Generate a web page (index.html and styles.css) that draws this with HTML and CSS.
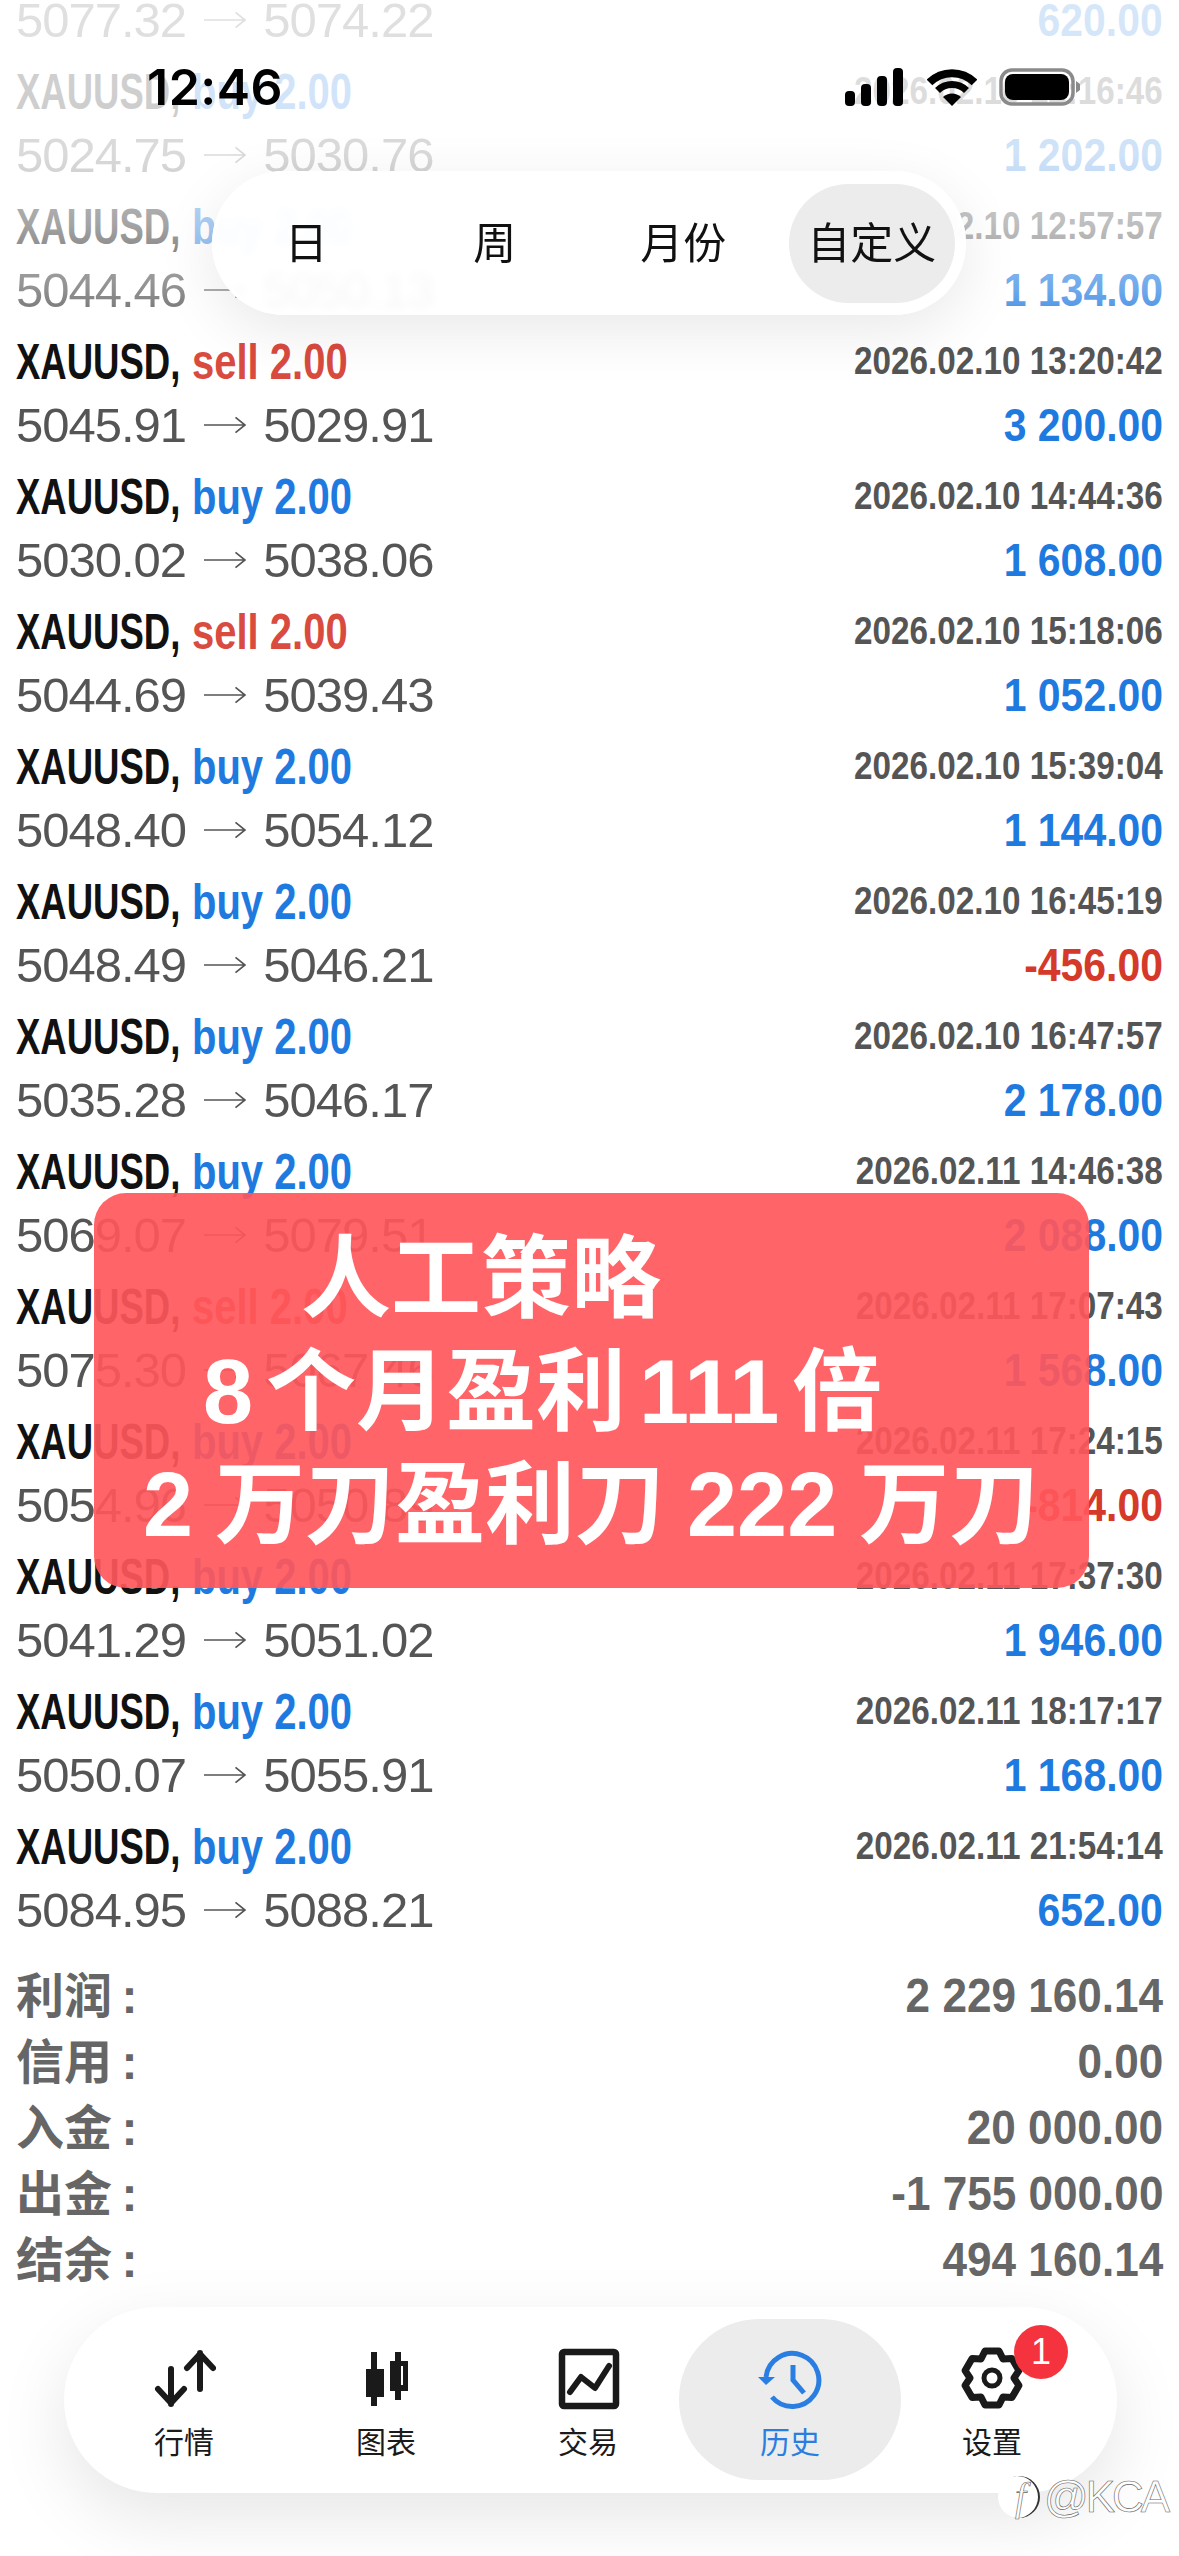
FILE: index.html
```html
<!DOCTYPE html>
<html lang="zh-CN">
<head>
    <meta charset="UTF-8">
    <meta name="viewport" content="width=device-width, initial-scale=1.0">
    <title>历史</title>
    <link rel="stylesheet" href="styles.css">
</head>
<body>
    <svg class="defs" width="0" height="0">
        <symbol id="arrow" viewBox="0 0 44 20"><path d="M0 10H42.5M33 2L43 10L33 18" fill="none" stroke="#555" stroke-width="1.8"/></symbol>
    </svg>
    <div class="screen">
        <div class="deals">
            <div class="deal">
                <div class="prices">5077.32 <svg class="arrow"><use href="#arrow"/></svg> 5074.22</div>
                <div class="amount">620.00</div>
            </div>
            <div class="deal">
                <div class="title"><span class="symbol">XAUUSD,</span><span class="side buy">buy 2.00</span></div>
                <div class="date">2026.02.10 12:16:46</div>
                <div class="prices">5024.75 <svg class="arrow"><use href="#arrow"/></svg> 5030.76</div>
                <div class="amount">1 202.00</div>
            </div>
            <div class="deal">
                <div class="title"><span class="symbol">XAUUSD,</span><span class="side buy">buy 2.00</span></div>
                <div class="date">2026.02.10 12:57:57</div>
                <div class="prices">5044.46 <svg class="arrow"><use href="#arrow"/></svg> 5050.13</div>
                <div class="amount">1 134.00</div>
            </div>
            <div class="deal">
                <div class="title"><span class="symbol">XAUUSD,</span><span class="side sell">sell 2.00</span></div>
                <div class="date">2026.02.10 13:20:42</div>
                <div class="prices">5045.91 <svg class="arrow"><use href="#arrow"/></svg> 5029.91</div>
                <div class="amount">3 200.00</div>
            </div>
            <div class="deal">
                <div class="title"><span class="symbol">XAUUSD,</span><span class="side buy">buy 2.00</span></div>
                <div class="date">2026.02.10 14:44:36</div>
                <div class="prices">5030.02 <svg class="arrow"><use href="#arrow"/></svg> 5038.06</div>
                <div class="amount">1 608.00</div>
            </div>
            <div class="deal">
                <div class="title"><span class="symbol">XAUUSD,</span><span class="side sell">sell 2.00</span></div>
                <div class="date">2026.02.10 15:18:06</div>
                <div class="prices">5044.69 <svg class="arrow"><use href="#arrow"/></svg> 5039.43</div>
                <div class="amount">1 052.00</div>
            </div>
            <div class="deal">
                <div class="title"><span class="symbol">XAUUSD,</span><span class="side buy">buy 2.00</span></div>
                <div class="date">2026.02.10 15:39:04</div>
                <div class="prices">5048.40 <svg class="arrow"><use href="#arrow"/></svg> 5054.12</div>
                <div class="amount">1 144.00</div>
            </div>
            <div class="deal">
                <div class="title"><span class="symbol">XAUUSD,</span><span class="side buy">buy 2.00</span></div>
                <div class="date">2026.02.10 16:45:19</div>
                <div class="prices">5048.49 <svg class="arrow"><use href="#arrow"/></svg> 5046.21</div>
                <div class="amount loss">-456.00</div>
            </div>
            <div class="deal">
                <div class="title"><span class="symbol">XAUUSD,</span><span class="side buy">buy 2.00</span></div>
                <div class="date">2026.02.10 16:47:57</div>
                <div class="prices">5035.28 <svg class="arrow"><use href="#arrow"/></svg> 5046.17</div>
                <div class="amount">2 178.00</div>
            </div>
            <div class="deal">
                <div class="title"><span class="symbol">XAUUSD,</span><span class="side buy">buy 2.00</span></div>
                <div class="date">2026.02.11 14:46:38</div>
                <div class="prices">5069.07 <svg class="arrow"><use href="#arrow"/></svg> 5079.51</div>
                <div class="amount">2 088.00</div>
            </div>
            <div class="deal">
                <div class="title"><span class="symbol">XAUUSD,</span><span class="side sell">sell 2.00</span></div>
                <div class="date">2026.02.11 17:07:43</div>
                <div class="prices">5075.30 <svg class="arrow"><use href="#arrow"/></svg> 5067.46</div>
                <div class="amount">1 568.00</div>
            </div>
            <div class="deal">
                <div class="title"><span class="symbol">XAUUSD,</span><span class="side buy">buy 2.00</span></div>
                <div class="date">2026.02.11 17:24:15</div>
                <div class="prices">5054.96 <svg class="arrow"><use href="#arrow"/></svg> 5050.89</div>
                <div class="amount loss">-814.00</div>
            </div>
            <div class="deal">
                <div class="title"><span class="symbol">XAUUSD,</span><span class="side buy">buy 2.00</span></div>
                <div class="date">2026.02.11 17:37:30</div>
                <div class="prices">5041.29 <svg class="arrow"><use href="#arrow"/></svg> 5051.02</div>
                <div class="amount">1 946.00</div>
            </div>
            <div class="deal">
                <div class="title"><span class="symbol">XAUUSD,</span><span class="side buy">buy 2.00</span></div>
                <div class="date">2026.02.11 18:17:17</div>
                <div class="prices">5050.07 <svg class="arrow"><use href="#arrow"/></svg> 5055.91</div>
                <div class="amount">1 168.00</div>
            </div>
            <div class="deal">
                <div class="title"><span class="symbol">XAUUSD,</span><span class="side buy">buy 2.00</span></div>
                <div class="date">2026.02.11 21:54:14</div>
                <div class="prices">5084.95 <svg class="arrow"><use href="#arrow"/></svg> 5088.21</div>
                <div class="amount">652.00</div>
            </div>
        </div>

        <div class="summary">
            <div class="summary-row"><span class="summary-label">利润&#8201;:</span><span class="summary-value">2 229 160.14</span></div>
            <div class="summary-row"><span class="summary-label">信用&#8201;:</span><span class="summary-value">0.00</span></div>
            <div class="summary-row"><span class="summary-label">入金&#8201;:</span><span class="summary-value">20 000.00</span></div>
            <div class="summary-row"><span class="summary-label">出金&#8201;:</span><span class="summary-value">-1 755 000.00</span></div>
            <div class="summary-row"><span class="summary-label">结余&#8201;:</span><span class="summary-value">494 160.14</span></div>
        </div>

        <nav class="tabbar">
            <div class="tab">
                <svg class="tab-icon" viewBox="0 0 64 64" fill="none" stroke="#1a1a1a" stroke-width="6" stroke-linecap="round" stroke-linejoin="round">
                    <path d="M19 23V58M6 43L19 57L32 43"/>
                    <path d="M48 43V7M35 22L48 8L61 22"/>
                </svg>
                <span class="tab-label">行情</span>
            </div>
            <div class="tab">
                <svg class="tab-icon" viewBox="0 0 64 64" fill="#1a1a1a">
                    <rect x="17" y="6" width="6" height="54"/>
                    <rect x="12" y="23" width="18" height="28"/>
                    <rect x="41" y="6" width="6" height="48"/>
                    <path fill-rule="evenodd" d="M36 15H54V45H36ZM41 20V39H49V20Z"/>
                </svg>
                <span class="tab-label">图表</span>
            </div>
            <div class="tab">
                <svg class="tab-icon" viewBox="0 0 64 64" fill="none" stroke="#1a1a1a" stroke-linecap="round" stroke-linejoin="round">
                    <rect x="6" y="6" width="54" height="54" rx="2" stroke-width="6.5"/>
                    <path d="M14 46L25 31L39 42L53 20" stroke-width="6"/>
                </svg>
                <span class="tab-label">交易</span>
            </div>
            <div class="tab active">
                <svg class="tab-icon" viewBox="0 0 64 64" fill="none" stroke="#2a7de1" stroke-width="5">
                    <path d="M8 31A26.5 26.5 0 1 1 14 51"/>
                    <path d="M35 19V34L46 47"/>
                    <path d="M0 31H17L8 39Z" fill="#2a7de1" stroke="none"/>
                </svg>
                <span class="tab-label">历史</span>
            </div>
            <div class="tab">
                <svg class="tab-icon" viewBox="0 0 64 64" fill="none" stroke="#1a1a1a" stroke-linejoin="round">
                    <path stroke-width="7" d="M25 5H39L43 13L51.9 12.4L58.9 24.6L54 32L58.9 39.4L51.9 51.6L43 51L39 59H25L21 51L12.1 51.6L5.1 39.4L10 32L5.1 24.6L12.1 12.4L21 13Z"/>
                    <circle cx="32" cy="32" r="8" stroke-width="5"/>
                </svg>
                <span class="tab-label">设置</span>
                <span class="badge">1</span>
            </div>
        </nav>

        <!-- everything below floats over the list -->
        <div class="top-fade"></div>

        <div class="statusbar">
            <span class="clock">12:46</span>
            <div class="status-icons">
                <svg width="60" height="38" viewBox="0 0 60 38" fill="#000">
                    <rect x="0" y="23" width="10" height="15" rx="4"/>
                    <rect x="16" y="16" width="10" height="22" rx="4"/>
                    <rect x="32" y="8" width="10" height="30" rx="4"/>
                    <rect x="48" y="0" width="10" height="38" rx="4"/>
                </svg>
                <svg width="50" height="38" viewBox="0 0 50 38" fill="none" stroke="#000">
                    <path stroke-width="8" d="M2.5 14.5A32 32 0 0 1 47.5 14.5"/>
                    <path stroke-width="7" d="M10.5 22.5A20.5 20.5 0 0 1 39.5 22.5"/>
                    <path fill="#000" stroke="none" d="M25 38L16 29A13 13 0 0 1 34 29Z"/>
                </svg>
                <svg width="82" height="38" viewBox="0 0 82 38">
                    <rect x="2" y="2" width="72" height="34" rx="11" fill="none" stroke="#8a8a8a" stroke-width="3.5"/>
                    <rect x="6" y="6" width="64" height="26" rx="8" fill="#000"/>
                    <path d="M77 13L81 16V22L77 25Z" fill="#8a8a8a"/>
                </svg>
            </div>
        </div>

        <div class="periods">
            <div class="period">日</div>
            <div class="period">周</div>
            <div class="period">月份</div>
            <div class="period selected">自定义</div>
        </div>

        <div class="banner">
            <div class="banner-line first">人工策略</div>
            <div class="banner-line second">8 个月盈利 111 倍</div>
            <div class="banner-line third">2 万刀盈利刀 222 万刀</div>
        </div>

        <div class="watermark"><span class="watermark-logo">f</span>@KCA</div>
    </div>
</body>
</html>
```

FILE: styles.css
```css
* {
    box-sizing: border-box;
}
body {
    margin: 0;
    background: #fff;
    font-family: "Liberation Sans", "Noto Sans CJK SC", sans-serif;
}
.defs {
    position: absolute;
}
.screen {
    position: relative;
    width: 1179px;
    height: 2556px;
    overflow: hidden;
    background: #fff;
}

/* deal list */
.deals {
    margin-top: -12px;
    padding: 0 16px;
}
.deal {
    display: grid;
    grid-template-columns: 1fr auto;
    grid-auto-rows: 63px;
    align-items: center;
    padding-bottom: 9px;
}
.title {
    display: flex;
    gap: 12px;
    font-size: 50px;
    font-weight: 700;
    white-space: nowrap;
}
/* the app draws these in a condensed cut, no such font here */
.symbol {
    display: inline-block;
    width: 164px;
    color: #111;
    transform: scaleX(0.73);
    transform-origin: 0 50%;
}
.side {
    display: inline-block;
    width: 162px;
    transform: scaleX(0.8);
    transform-origin: 0 50%;
}
.buy {
    color: #1f7ae0;
}
.sell {
    color: #d94a3f;
}
.date {
    justify-self: end;
    font-size: 38px;
    font-weight: 700;
    color: #555;
    transform: scaleX(0.875);
    transform-origin: 100% 50%;
}
.prices {
    font-size: 49px;
    letter-spacing: -1px;
    color: #555;
}
.arrow {
    width: 42px;
    height: 20px;
    margin: 0 5px;
    vertical-align: 7px;
}
.amount {
    justify-self: end;
    font-size: 46px;
    font-weight: 700;
    color: #1f7ae0;
    transform: scaleX(0.89);
    transform-origin: 100% 50%;
}
.loss {
    color: #d5392a;
}

/* totals */
.summary {
    padding: 12px 16px 0;
}
.summary-row {
    display: flex;
    justify-content: space-between;
    align-items: center;
    height: 66px;
    color: #666;
    font-weight: 700;
}
.summary-label {
    margin-bottom: 6px;
    font-size: 48px;
}
.summary-value {
    font-size: 49px;
    transform: scaleX(0.9);
    transform-origin: 100% 50%;
}

/* bottom navigation */
.tabbar {
    display: grid;
    grid-template-columns: repeat(5, 202px);
    width: 1053px;
    height: 186px;
    margin: 15px 0 0 64px;
    padding: 12px 19px 13px;
    background: #fff;
    border-radius: 93px;
    box-shadow: 0 24px 70px rgba(0,0,0,0.1);
}
.tab {
    position: relative;
    display: flex;
    flex-direction: column;
    align-items: center;
    padding-top: 27px;
    border-radius: 80px;
    color: #1a1a1a;
}
.tab.active {
    margin: 0 -10px;
    background: #ececec;
    color: #2a7de1;
}
.tab-icon {
    width: 64px;
    height: 64px;
}
.tab-label {
    margin-top: 13px;
    font-size: 30px;
    line-height: 40px;
}
.badge {
    position: absolute;
    top: 6px;
    left: 123px;
    width: 54px;
    height: 54px;
    border-radius: 50%;
    background: #f5333f;
    color: #fff;
    font-size: 36px;
    line-height: 54px;
    text-align: center;
}

/* overlays at the top */
.top-fade {
    position: absolute;
    top: 0;
    left: 0;
    right: 0;
    height: 345px;
    background: linear-gradient(rgba(255,255,255,0.82) 0, rgba(255,255,255,0.78) 45%, rgba(255,255,255,0.62) 65%, rgba(255,255,255,0.35) 84%, rgba(255,255,255,0) 100%);
}
.statusbar {
    position: absolute;
    top: 64px;
    left: 147px;
    width: 934px;
    height: 46px;
    display: flex;
    justify-content: space-between;
    align-items: center;
}
.clock {
    font-family: Inter, "Liberation Sans", sans-serif;
    font-size: 50px;
    font-weight: 600;
    letter-spacing: 0.5px;
    color: #000;
}
.status-icons {
    display: flex;
    align-items: center;
    gap: 22px;
}
.periods {
    position: absolute;
    top: 171px;
    left: 212px;
    width: 754px;
    height: 144px;
    display: grid;
    grid-template-columns: repeat(4, 1fr);
    align-items: center;
    background: rgba(255,255,255,0.92);
    backdrop-filter: blur(5px);
    border-radius: 72px;
    box-shadow: 0 16px 60px rgba(0,0,0,0.09), inset 0 0 0 3px rgba(255,255,255,0.7);
    font-family: "Noto Sans CJK SC", sans-serif;
    font-size: 43px;
    color: #111;
}
.period {
    height: 119px;
    padding-bottom: 6px;
    display: flex;
    align-items: center;
    justify-content: center;
}
.period.selected {
    margin: 0 11px;
    background: #ececec;
    border-radius: 60px;
}

/* promo banner */
.banner {
    position: absolute;
    top: 1193px;
    left: 94px;
    width: 995px;
    height: 395px;
    padding-top: 30px;
    background: rgba(255,87,91,0.92);
    border-radius: 32px;
    color: #fff;
    font-size: 90px;
    font-weight: 700;
    line-height: 113px;
    white-space: nowrap;
}
.banner-line.first {
    margin-left: 207px;
}
.banner-line.second {
    margin-left: 109px;
    word-spacing: -12px;
}
.banner-line.third {
    margin-left: 49px;
    word-spacing: -3px;
}

.watermark {
    position: absolute;
    top: 2472px;
    left: 998px;
    display: flex;
    align-items: center;
    gap: 4px;
    font-size: 44px;
    letter-spacing: -3px;
    line-height: 50px;
    color: #fff;
    -webkit-text-stroke: 0.6px #666;
}
.watermark-logo {
    width: 42px;
    height: 42px;
    border-radius: 50%;
    background: #fff;
    box-shadow: inset -2px 0 0 #333;
    color: #fff;
    font-family: "Liberation Serif", serif;
    font-style: italic;
    font-size: 40px;
    line-height: 42px;
    text-align: center;
}
```
